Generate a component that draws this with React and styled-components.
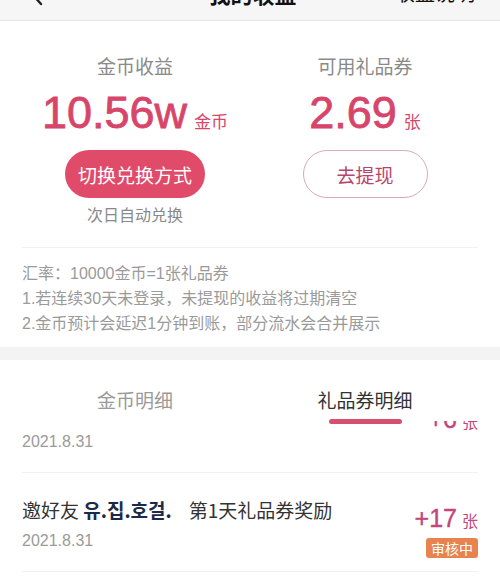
import React from "react";
import styled, { createGlobalStyle } from "styled-components";

const GlobalStyle = createGlobalStyle`
  html, body {
    margin: 0;
    padding: 0;
    background: #ffffff;
    overflow: hidden;
  }
  body {
    font-family: "Liberation Sans", "Noto Sans CJK SC", "Noto Sans CJK KR", sans-serif;
    color: #333;
  }
  * { box-sizing: border-box; }
`;

const Page = styled.div`
  width: 500px;
  height: 578px;
  display: flex;
  flex-direction: column;
  background: #fff;
  overflow: hidden;
`;

const Header = styled.header`
  height: 21px;
  flex: none;
  background: #f6f6f6;
  border-bottom: 1px solid #e4e4e4;
  display: flex;
  align-items: flex-end;
  padding: 0 25px 16px 30px;
  overflow: hidden;
`;

const HeaderSide = styled.div`
  flex: 1;
  display: flex;
  justify-content: ${(p) => (p.$end ? "flex-end" : "flex-start")};
  align-items: flex-end;
`;

const BackIcon = styled.svg`
  width: 14px;
  height: 22px;
  flex: none;
  margin-bottom: -2px;
`;

const HeaderTitle = styled.div`
  flex: none;
  font-size: 22px;
  line-height: 22px;
  font-weight: 600;
  color: #111;
  font-family: "Noto Sans CJK SC", sans-serif;
`;

const HeaderAction = styled.div`
  font-size: 20px;
  line-height: 22px;
  color: #111;
  font-family: "Noto Sans CJK SC", sans-serif;
`;

const Summary = styled.section`
  flex: none;
  background: #fff;
  padding: 35px 20px 0;
`;

const Columns = styled.div`
  display: grid;
  grid-template-columns: 1fr 1fr;
`;

const Column = styled.div`
  display: flex;
  flex-direction: column;
  align-items: center;
`;

const Label = styled.div`
  font-size: 19px;
  line-height: 24px;
  color: #8a8a8a;
`;

const ValueRow = styled.div`
  margin-top: 10px;
  display: flex;
  align-items: baseline;
  gap: 7px;
  color: #d8456a;
`;

const BigNumber = styled.span`
  font-size: 45px;
  line-height: 46px;
  font-family: "Liberation Sans", sans-serif;
  -webkit-text-stroke: 0.8px currentColor;
`;

const Unit = styled.span`
  font-size: 17px;
  font-family: "Noto Sans CJK SC", sans-serif;
`;

const PillButton = styled.button`
  margin-top: 14px;
  height: 48px;
  width: ${(p) => p.$w}px;
  border-radius: 24px;
  font-family: "Noto Sans CJK SC", sans-serif;
  font-size: 19px;
  padding: 0;
  cursor: pointer;
  background: ${(p) => (p.$primary ? "#e04b69" : "#fff")};
  color: ${(p) => (p.$primary ? "#fff" : "#b8466c")};
  border: ${(p) => (p.$primary ? "none" : "1px solid #dcaab8")};
`;

const Hint = styled.div`
  margin-top: 7px;
  font-size: 16px;
  line-height: 22px;
  color: #8a8a8a;
`;

const Notes = styled.div`
  margin: 20px 2px 0;
  border-top: 1px solid #f1f1f1;
  padding: 13px 0 11px;
  font-size: 16px;
  line-height: 25px;
  color: #9a9a9a;
`;

const Gap = styled.div`
  flex: none;
  height: 13px;
  background: #f3f3f3;
`;

const Tabs = styled.nav`
  flex: none;
  height: 61px;
  padding: 27px 20px 0;
  display: grid;
  grid-template-columns: 1fr 1fr;
  background: #fff;
  position: relative;
  z-index: 2;
`;

const Tab = styled.div`
  position: relative;
  text-align: center;
  font-size: 19px;
  line-height: 26px;
  font-family: "Noto Sans CJK SC", sans-serif;
  color: ${(p) => (p.$active ? "#333" : "#9a9a9a")};
`;

const Underline = styled.span`
  position: absolute;
  left: 50%;
  top: 32px;
  width: 73px;
  height: 5px;
  margin-left: -36px;
  border-radius: 3px;
  background: #d9506f;
`;

const ListViewport = styled.div`
  flex: 1;
  overflow: hidden;
`;

const List = styled.div`
  transform: translateY(-47px);
  padding: 0 22px;
`;

const Row = styled.div`
  height: 99px;
  display: flex;
  justify-content: space-between;
  border-bottom: 1px solid #f1f1f1;
  padding: 24px 0 0;
`;

const RowMain = styled.div`
  display: flex;
  flex-direction: column;
  gap: 8px;
`;

const RowTitle = styled.div`
  font-size: 19px;
  line-height: 26px;
  color: #333;
  white-space: pre;
  font-family: "Noto Sans CJK SC", "Noto Sans CJK KR", sans-serif;
`;

const Nick = styled.span`
  font-weight: 700;
  color: #1c2a48;
`;

const RowDate = styled.div`
  font-size: 16px;
  line-height: 20px;
  color: #9a9a9a;
`;

const RowSide = styled.div`
  margin-top: 6px;
  display: flex;
  flex-direction: column;
  align-items: flex-end;
  gap: 3px;
`;

const Amount = styled.div`
  display: flex;
  align-items: baseline;
  gap: 5px;
  color: #c4467c;
  line-height: 30px;
`;

const AmountNum = styled.span`
  font-size: 25px;
  -webkit-text-stroke: 0.4px currentColor;
`;

const AmountUnit = styled.span`
  font-size: 16px;
  font-family: "Noto Sans CJK SC", sans-serif;
`;

const Badge = styled.span`
  height: 20px;
  padding: 0 5px;
  border-radius: 3px;
  background: #e8824f;
  color: #fff;
  font-size: 14px;
  line-height: 20px;
  font-family: "Noto Sans CJK SC", sans-serif;
`;

const records = [
  { title: "第2天礼品券奖励", date: "2021.8.31", amount: "6", status: null },
  { title: "第1天礼品券奖励", date: "2021.8.31", amount: "17", status: "审核中" },
];

export default function App() {
  return (
    <Page>
      <GlobalStyle />
      <Header>
        <HeaderSide>
          <BackIcon viewBox="0 0 14 22">
            <path d="M11 2 L3 11 L11 20" fill="none" stroke="#222" strokeWidth="2.4" strokeLinecap="round" strokeLinejoin="round" />
          </BackIcon>
        </HeaderSide>
        <HeaderTitle>我的收益</HeaderTitle>
        <HeaderSide $end>
          <HeaderAction>收益说明</HeaderAction>
        </HeaderSide>
      </Header>

      <Summary>
        <Columns>
          <Column>
            <Label>金币收益</Label>
            <ValueRow>
              <BigNumber>10.56w</BigNumber>
              <Unit>金币</Unit>
            </ValueRow>
            <PillButton $primary $w={140}>切换兑换方式</PillButton>
            <Hint>次日自动兑换</Hint>
          </Column>
          <Column>
            <Label>可用礼品券</Label>
            <ValueRow>
              <BigNumber>2.69</BigNumber>
              <Unit>张</Unit>
            </ValueRow>
            <PillButton $w={125}>去提现</PillButton>
          </Column>
        </Columns>
        <Notes>
          <div>汇率：10000金币=1张礼品券</div>
          <div>1.若连续30天未登录，未提现的收益将过期清空</div>
          <div>2.金币预计会延迟1分钟到账，部分流水会合并展示</div>
        </Notes>
      </Summary>

      <Gap />

      <Tabs>
        <Tab>金币明细</Tab>
        <Tab $active>
          礼品券明细
          <Underline />
        </Tab>
      </Tabs>

      <ListViewport>
        <List>
          {records.map((r, i) => (
            <Row key={i}>
              <RowMain>
                <RowTitle>
                  邀好友 <Nick>유.집.호걸.</Nick>{"    "}{r.title}
                </RowTitle>
                <RowDate>{r.date}</RowDate>
              </RowMain>
              <RowSide>
                <Amount>
                  <AmountNum>+{r.amount}</AmountNum>
                  <AmountUnit>张</AmountUnit>
                </Amount>
                {r.status && <Badge>{r.status}</Badge>}
              </RowSide>
            </Row>
          ))}
        </List>
      </ListViewport>
    </Page>
  );
}
